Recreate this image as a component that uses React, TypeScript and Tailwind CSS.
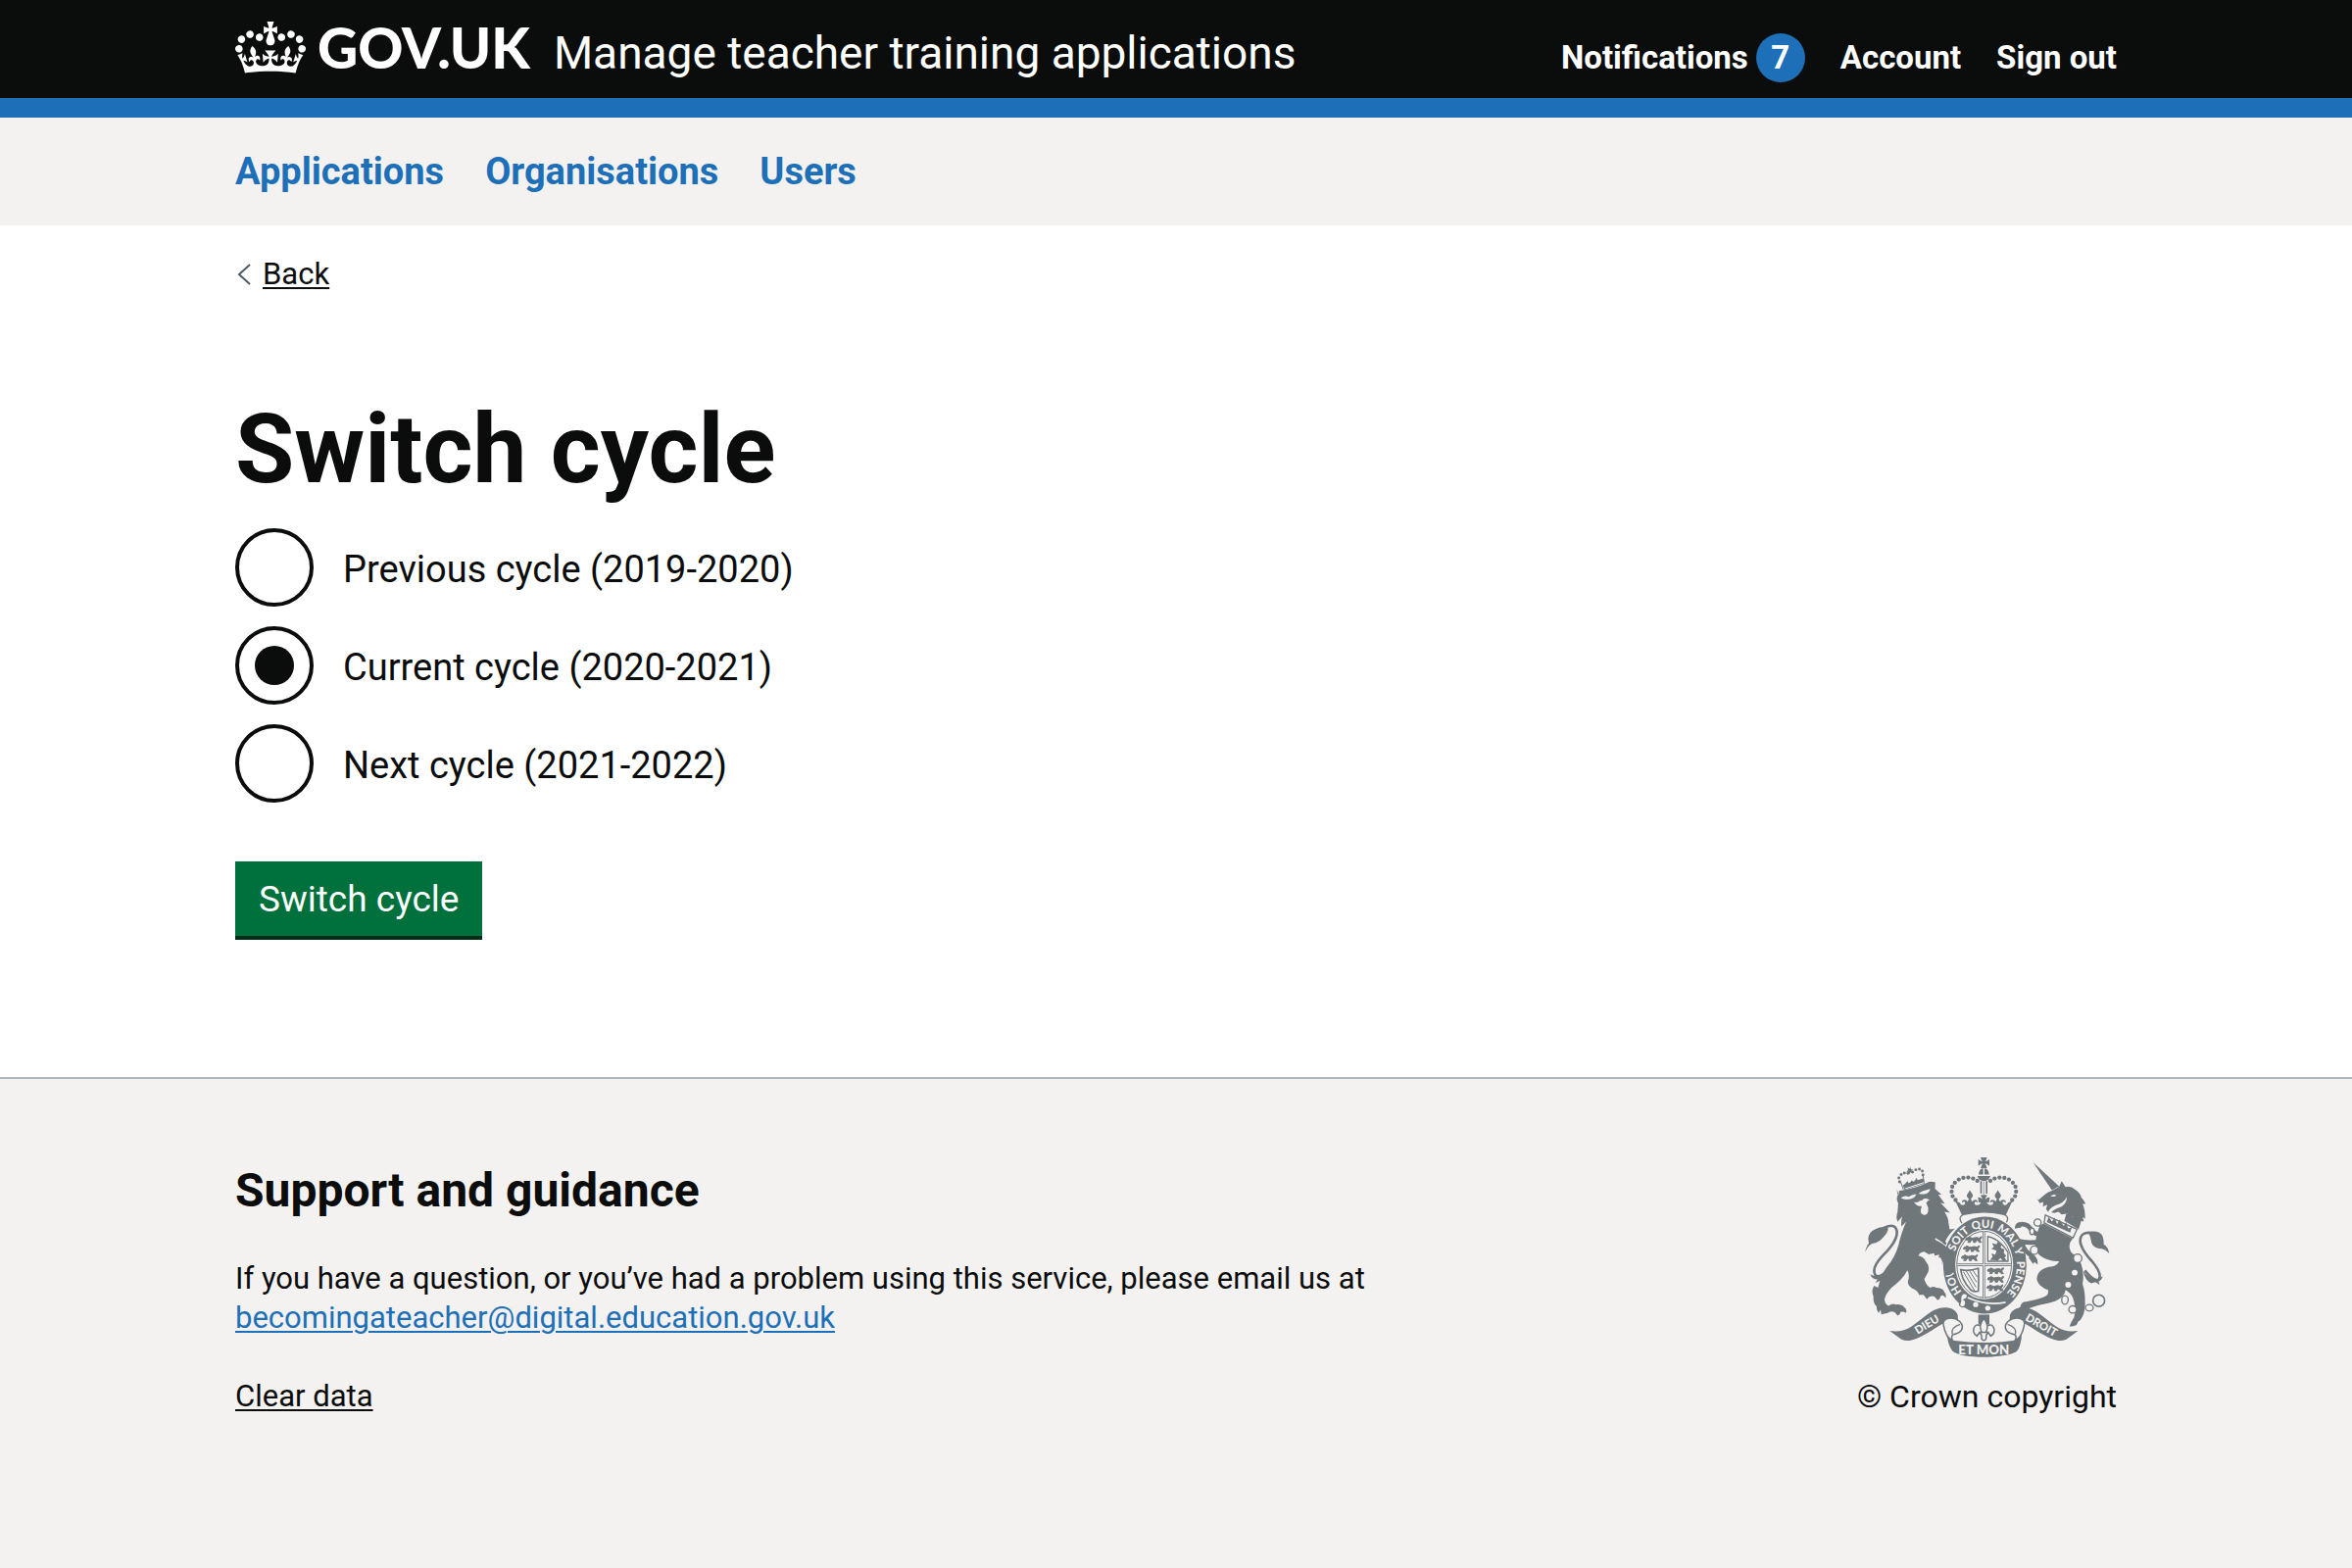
import { useState } from "react";

const CYCLES = [
  { id: "previous", label: "Previous cycle (2019-2020)" },
  { id: "current", label: "Current cycle (2020-2021)" },
  { id: "next", label: "Next cycle (2021-2022)" },
];

function Crown() {
  return (
    <svg aria-hidden="true" viewBox="0 0 132 97" className="h-[53px] w-[72px] shrink-0 fill-current">
      <path d="M25 30.2c3.5 1.5 7.7-.2 9.1-3.7 1.5-3.6-.2-7.8-3.9-9.2-3.6-1.4-7.6.3-9.1 3.9-1.4 3.5.3 7.5 3.9 9zM9 39.5c3.6 1.5 7.8-.2 9.2-3.7 1.5-3.6-.2-7.8-3.9-9.1-3.6-1.5-7.6.2-9.1 3.8-1.4 3.5.3 7.5 3.8 9zM4.4 57.2c3.5 1.5 7.7-.2 9.1-3.8 1.5-3.6-.2-7.7-3.9-9.1-3.5-1.5-7.6.3-9.1 3.8-1.4 3.5.3 7.6 3.9 9.1zm38.3-21.4c3.5 1.5 7.7-.2 9.1-3.8 1.5-3.6-.2-7.7-3.9-9.1-3.6-1.5-7.6.3-9.1 3.8-1.3 3.6.4 7.7 3.9 9.1zm64.4-5.6c-3.6 1.5-7.8-.2-9.1-3.7-1.5-3.6.2-7.8 3.8-9.2 3.6-1.4 7.7.3 9.2 3.9 1.3 3.5-.4 7.5-3.9 9zm15.9 9.3c-3.6 1.5-7.7-.2-9.1-3.7-1.5-3.6.2-7.8 3.7-9.1 3.6-1.5 7.7.2 9.2 3.8 1.5 3.5-.3 7.5-3.8 9zm4.7 17.7c-3.6 1.5-7.8-.2-9.2-3.8-1.5-3.6.2-7.7 3.9-9.1 3.6-1.5 7.7.3 9.2 3.8 1.3 3.5-.4 7.6-3.9 9.1zM89.3 35.8c-3.6 1.5-7.8-.2-9.2-3.8-1.4-3.6.2-7.7 3.9-9.1 3.6-1.5 7.7.3 9.2 3.8 1.4 3.6-.3 7.7-3.9 9.1zM69.7 17.7l8.9 4.7V9.3l-8.9 2.8c-.2-.3-.5-.6-.9-.9L72.4 0H59.6l3.5 11.2c-.3.3-.6.5-.9.9l-8.8-2.8v13.1l8.8-4.7c.3.3.6.7.9.9l-5 15.4v.1c-.2.8-.4 1.6-.4 2.4 0 4.1 3.1 7.5 7 8.1h.2c.3 0 .7.1 1 .1.4 0 .7 0 1-.1h.2c4-.6 7.1-4.1 7.1-8.1 0-.8-.1-1.7-.4-2.4V34l-5.1-15.4c.4-.2.7-.6 1-.9zM66 92.8c16.9 0 32.8 1.1 47.1 3.2 4-16.9 8.9-26.7 14-33.5l-9.6-3.4c1 4.9 1.1 7.2 0 10.2-1.5-1.4-3-4.3-4.2-8.7L108.6 76c2.8-2 5-3.2 7.5-3.3-4.4 9.4-10 11.9-13.6 11.2-4.3-.8-6.3-4.6-5.6-7.9 1-4.7 5.7-5.9 8-.5 4.3-8.7-3-11.4-7.6-8.8 7.1-7.2 7.9-13.5 2.1-21.1-8 6.1-8.1 12.3-4.5 20.8-4.7-5.4-12.1-2.5-9.5 6.2 3.4-5.2 7.9-2 7.2 3.1-.6 4.3-6.4 7.8-13.5 7.2-10.3-.9-10.9-8-11.2-13.8 2.5-.5 7.1 1.8 11 7.3L80.2 60c-4.1 4.4-8 5.3-12.3 5.4 1.4-4.4 8-11.6 8-11.6H55.5s6.4 7.2 7.9 11.6c-4.2-.1-8-1-12.3-5.4l1.4 16.4c3.9-5.5 8.5-7.7 10.9-7.3-.3 5.8-.9 12.8-11.1 13.8-7.2.6-12.9-2.9-13.5-7.2-.7-5 3.8-8.3 7.1-3.1 2.7-8.7-4.6-11.6-9.4-6.2 3.7-8.5 3.6-14.7-4.6-20.8-5.8 7.6-5 13.9 2.2 21.1-4.7-2.6-11.9.1-7.7 8.8 2.3-5.5 7.1-4.2 8.1.5.7 3.3-1.3 7.1-5.7 7.9-3.5.7-9-1.8-13.5-11.2 2.5.1 4.7 1.3 7.5 3.3l-4.7-15.4c-1.2 4.4-2.7 7.2-4.3 8.7-1.1-3-.9-5.3 0-10.2l-9.5 3.4c5 6.9 9.9 16.7 14 33.5 14.8-2.1 30.8-3.2 47.7-3.2z" />
    </svg>
  );
}

const INK = "#6f777b";
const PAPER = "#f3f2f1";

const ARCH_PEARLS = [
  [417, 137], [404, 130], [389, 127], [374, 128], [360, 133],
  [348, 143], [340, 155], [338, 170], [341, 184], [350, 196],
];

const LION_CROWN_PEARLS = [
  [178, 140], [176, 128], [183, 118], [193, 113], [204, 114],
  [218, 110], [228, 103], [239, 101], [248, 107], [250, 119],
];

const PASSANT = "M0 8q2-8 7-6q3-6 8-1q5 4 12 1q8-3 14 1l8-5v5l-5 4q2 6 5 9h-7q-3-6-7-6t-4 6h-7q1-6-3-7t-7 7h-7q3-5 2-8q-5 3-9 0z";

function CrownHalf() {
  return (
    <g>
      {ARCH_PEARLS.map(([x, y]) => (
        <circle key={x} cx={x} cy={y} r="6.5" />
      ))}
      <path d="M426 138h5v38h-5z" />
      <path d="M349 198l14 6q2 8 10 8q8-2 6-10q-6-3-9 3q-2-10 8-10q7 0 9 6l4-8q-8-8-6-13l9-14l9 14q2 6-6 13l4 8q3-6 10-6q9 1 6 10q-3-6-8-3q-3 9 6 10q9 0 13-8q-6-3-7 2l-2-18q8-1 13 6q0-7-6-13h16v62q-39-2-69 6z" />
    </g>
  );
}

function SideScroll() {
  return (
    <g>
      <path d="M148 598C175 602 195 597 215 584C240 568 262 545 285 534C315 520 350 526 357 550Q359 562 355 574C340 566 318 570 300 582C270 600 240 622 212 627Q198 630 184 624Q166 612 148 598z" />
      <path d="M313 580q-4-14 12-20q20-6 38 9q14 14 4 28q-6 8-24 12q-8 4-2 20l-16-14q-10-20-12-35z" fill={PAPER} stroke={INK} strokeWidth="4.5" />
      <path d="M340 608q-6-20 24-30" fill="none" stroke={INK} strokeWidth="4" />
    </g>
  );
}

function RoyalArms() {
  return (
    <svg aria-hidden="true" viewBox="70 65 753 614" className="h-[204px] w-[251px]" fill={INK}>
      {/* crown */}
      <path d="M427 65h20q-2 9-7 13q7-1 14-7v20q-7-6-14-7q5 6 7 14h-20q2-8 7-14q-7 1-14 7v-20q7 6 14 7q-5-4-7-13z" />
      <path d="M421 118q1-18 14-19v19zM453 118q-1-18-14-19v19z" />
      <path d="M417 122h40q-4 14-20 16q-16-2-20-16z" />
      <CrownHalf />
      <g transform="translate(874 0) scale(-1 1)">
        <CrownHalf />
      </g>
      <path d="M437 139v40" stroke={INK} strokeWidth="2" />
      <path d="M370 268q-14-20 4-27q63-16 126 0q18 7 4 27" fill={PAPER} stroke={INK} strokeWidth="4" />

      {/* lion */}
      <g>
        <path d="M190 164l-10-28M254 144l-5-28" stroke={INK} strokeWidth="3" />
        <path d="M188 150l62-20l6 15l-62 20z" />
        <path d="M192 154l10-12l4 9l10-12l5 8l9-14l3 10l13-8" fill="none" stroke={INK} strokeWidth="5" />
        {LION_CROWN_PEARLS.map(([x, y]) => (
          <circle key={x} cx={x} cy={y} r="4.5" />
        ))}
        <path d="M203 96l5 4l4-5l1 7l6-1l-4 6l3 6l-6-2l-5 6l-1-7l-7-1l5-4z" />
        <path d="M196 161l58-19" stroke={PAPER} strokeWidth="3" />
        <path d="M172 184q6-10 4-16q50-8 86-25q10-6 26-1l-1 19l20 18l-10 0l20 28l-13-2l29 30l-17-3q12 18 12 32l4 22l16-2q-20 18-30 40q16 8 28 28q10 18 10 36q6 8 6 26l-8-2q-4 12-14 10l-6-12l-8 2l-4-16l-14-4l2-18l-12-2l2-8l-14 3l-2-8l-16 4l-14-8q-14 2-18 12q18 6 22 16q14 16 8 34l-12 22q6 20 18 26q12-6 18 0q22 0 26 14q6 6 4 18l-8-8l-8 2q-2 12-10 12l-8-10q-14-6-24 8l-10-14l-14 0q-4-14-22-20q-14-10-12-22q6-20-2-34q-10 22-34 42q-30 22-36 46q0 16 12 22q14-10 22-4q18-2 26 8q10 6 6 18l-8-4l-8 0q-2 10-10 12l-8-10q-14-6-22 2l-20 4l-2-14l-6 10q-8-10-6-20q-12-10-10-30q-8-20 2-34l12 6q10-40 26-62q30-36 38-74q6-26 22-66l-14 14q-2-14 2-30l-14 16q-6-14 0-30l2-28q-8-10 0-30l-4-12z" />
        <path d="M182 190q12-10 24-4q12-8 24-8q-6 14-24 16q-14 2-24-4zM236 176q10-8 22-10l14-4q-2 12-14 15q-12 2-22-1z" fill={PAPER} />
        <path d="M222 202q12 4 18-4q10 0 12-6q10-2 18 4q-8 2-10 10q8 12 6 24q-2 12-12 12q-12-2-11-16q4-8 2-12q-12 4-23-12z" fill={PAPER} />
        <path d="M288 315q40 22 56 62" fill="none" stroke={PAPER} strokeWidth="5" />
        <path d="M126 283q40-20 44 10q2 30-44 74q-36 38-22 60q16 12 50-28" fill="none" stroke={INK} strokeWidth="8" />
        <path d="M72 358q4-22 12-30q-8-30 18-42q20-10 40-6q4 12-14 30q-12 16-34 20q-14 6-22 28z" />
        <path d="M88 424q20 12 44-4q16-16 26-20q-6 32-30 40l-24 10l6-10q-16 0-22-16z" />
      </g>

      {/* unicorn */}
      <g>
        <path d="M588 80l80 74l-22 12z" />
        <path d="M602 198l22-19q8-8 22-12l22-12l8-17l12 18q14-6 30 8q16 10 18 24q12 14 13 20l-9 0q8 14 8 46l-8-6q-4 14-12 26l-4-18l-8 14l-6-24l-12 4l-6-12l-16 2l-10-8l-12 4l-20-4l-6-8l4-14l-14 6l2-14l-12 4l-6-14z" />
        <path d="M692 186q0 26-26 34q-18 6-28 22q-6-2-6-6q8-16 26-24q24-6 34-26z" fill={PAPER} />
        <path d="M642 184q8-8 18-2q-6 6-18 2z" fill={PAPER} />
        <path d="M690 238l20 10l28-10l6 24l-8-2l-8 26l-20-12l-24-14z" />
        <path d="M626 242l97 44l-12 26l-89-46z" fill={PAPER} stroke={INK} strokeWidth="4" />
        <path d="M630 264l6-16l10 14l8-12l8 20l8-14l12 20l8-12l6 20l12-6l-6 18z" />
        <path d="M620 268l90 46q-18 20-4 44q22 14 30 34q10 30 4 62q8 20 8 60q0 30-14 50l-8 6q-2 14-20 14l-6 0q6-16 14-28q6-20 0-48q-4-24-26-36q-6 30-50 40q-34 6-60 16q-4 14-16 10l-26 0q2-10 12-12q4-18 18-18q40-6 60-16q12-8 8-20q-26-8-34-30q-2-36 48-42q16-4 20-16q-36 2-62-20l-12-20q0-30 14-68z" />
      </g>

      {/* garter and shield */}
      <ellipse cx="440" cy="396" rx="132" ry="152" fill={PAPER} />
      <ellipse cx="440" cy="396" rx="128" ry="149" />
      <ellipse cx="438" cy="394" rx="89" ry="107" fill={PAPER} />
      <ellipse cx="438" cy="394" rx="84" ry="102" fill="none" stroke={INK} strokeWidth="3" />
      <path d="M437 292v206M355 395h166" stroke={INK} strokeWidth="8" />
      <path d="M437 292v206M355 395h166" stroke={PAPER} strokeWidth="3" />
      <g stroke={INK} strokeWidth="3">
        <path transform="translate(381 310)" d={PASSANT} />
        <path transform="translate(374 338)" d={PASSANT} />
        <path transform="translate(368 366)" d={PASSANT} />
        <path transform="translate(448 406)" d={PASSANT} />
        <path transform="translate(448 432)" d={PASSANT} />
        <path transform="translate(446 458)" d={PASSANT} />
      </g>
      <path d="M449 384v-76q34 6 62 48v28z" fill="none" stroke={INK} strokeWidth="4" />
      <path d="M456 380l8-10l-4-10l12 4l4-12l-16-6l8-6l-6-12l14 4l4-8l12 10l-4 8l12 6l-2 10l8 10l-6 4l8 12l-14-2l-6-8l-8 8l-14-2z" />
      <path d="M366 410q24 6 54-4q2 30 0 70q-20 4-28-10q-22-24-26-56z" fill="none" stroke={INK} strokeWidth="5" />
      <path d="M374 416l34 58M383 414l30 50M393 413l22 36M403 411l14 22" stroke={INK} strokeWidth="3" />

      {/* buckle */}
      <path d="M384 494q56 28 120 16" fill="none" stroke={PAPER} strokeWidth="5" />
      <path d="M376 482q16 2 8 16l-8 4q10 6 2 20q-10 6-16-4l4-12q-2-22 10-24z" fill={PAPER} stroke={INK} strokeWidth="4" />
      <circle cx="412" cy="517" r="8" fill={PAPER} />
      <circle cx="449" cy="528" r="8" fill={PAPER} />

      {/* lion's forepaw over the garter */}
      <path d="M296 322q40 20 50 62q0 16-4 34l-10 10l-8-14l-10-2l-2-22l-18-40z" />
      <path d="M344 420q-6 10-24 10" fill="none" stroke={PAPER} strokeWidth="4" />

      {/* unicorn's forelegs */}
      <path d="M616 302q-24 0-34-16q-10-16-28-16l-14 4M614 322q-30 8-60 2q2 24 28 42l14 18" fill="none" stroke={INK} strokeWidth="14" />
      <path d="M532 284q0-16 14-20l6 16zM542 338q0-16 8-22l14 14zM574 372l18-6q12 12 10 28l-10-8l-4 6z" />

      {/* chain and tail */}
      <g fill={PAPER} stroke={INK} strokeWidth="4">
        <circle cx="602" cy="265" r="11" />
        <ellipse cx="585" cy="292" rx="7" ry="10" />
        <ellipse cx="592" cy="350" rx="12" ry="13" />
        <circle cx="725" cy="375" r="13" />
        <ellipse cx="686" cy="503" rx="10" ry="13" />
        <ellipse cx="710" cy="532" rx="12" ry="11" />
        <ellipse cx="761" cy="527" rx="12" ry="10" />
      </g>
      <circle cx="790" cy="505" r="18" fill="none" stroke={INK} strokeWidth="5" />
      <circle cx="716" cy="419" r="9" fill={PAPER} />
      <circle cx="696" cy="456" r="9" fill={PAPER} />
      <path d="M772 298q-40-8-39 26q4 26 36 60q34 40 20 58q-16 2-42-30" fill="none" stroke={INK} strokeWidth="8" />
      <path d="M758 294q36-6 44 14q4 14 3 24q14 8 17 28q-12-12-22-14q-24 0-32-18q-2-14-10-34z" />
      <path d="M742 414q20 26 44 24l17-8q-4 12-14 16l4 10l-14-8l-12 4q-20-10-25-38z" />

      <defs>
        <path id="motto-ring" d="M440 512A98 115 0 0 1 440 281A98 115 0 0 1 440 512" />
      </defs>
      <g fill={PAPER} fontFamily="Lato, sans-serif" fontWeight="900" fontSize="34" textAnchor="middle">
        <text><textPath href="#motto-ring" startOffset="16%">HO</textPath></text>
        <text><textPath href="#motto-ring" startOffset="37%">SOIT</textPath></text>
        <text><textPath href="#motto-ring" startOffset="49%">QUI</textPath></text>
        <text><textPath href="#motto-ring" startOffset="61%">MAL</textPath></text>
        <text><textPath href="#motto-ring" startOffset="69%">Y</textPath></text>
        <text><textPath href="#motto-ring" startOffset="81%">PENSE</textPath></text>
      </g>

      {/* fleur-de-lis */}
      <path d="M420 548h34v30h-34z" />
      <g fill={PAPER} stroke={INK} strokeWidth="4.5">
        <path d="M432 604q-12-2-16 10q-14-8-10-24q6-16 20-8q6 6 4 14z" />
        <path d="M442 604q12-2 16 10q14-8 10-24q-6-16-20-8q-6 6-4 14z" />
        <path d="M437 560q18 20 6 44h-12q-12-24 6-44z" />
        <path d="M424 602h26l-6 10q2 14-7 15q-9-1-7-15z" />
      </g>

      {/* scrolls */}
      <SideScroll />
      <g transform="translate(874 0) scale(-1 1)">
        <SideScroll />
      </g>
      <path d="M325 608q6 14 22 20q90 12 180 0q16-6 22-20q6 6 2 20q-4 24-14 34q-28 16-100 16t-96-18q-16-20-16-52z" />
      <g fill={PAPER} fontFamily="Lato, sans-serif" fontWeight="900" fontSize="34" textAnchor="middle">
        <text x="437" y="669" fontSize="40">ET MON</text>
        <text transform="translate(268 588) rotate(-31)">DIEU</text>
        <text transform="translate(608 590) rotate(30)">DROIT</text>
      </g>
    </svg>
  );
}

export default function App() {
  const [cycle, setCycle] = useState("current");

  return (
    <div className="flex min-h-screen flex-col bg-white font-[Roboto,sans-serif] text-[31px] leading-10 text-[#0b0c0c]">
      <header>
        <div className="border-b-20 border-[#1d70b8] bg-[#0b0c0c] px-8 text-white">
          <div className="mx-auto flex h-[100px] max-w-[1920px] items-baseline pt-4">
            <a href="#home" className="flex items-center gap-3 font-[Lato,sans-serif] text-[57px] leading-16 font-black">
              <Crown />
              <span className="self-baseline">GOV.UK</span>
            </a>
            <a href="#service" className="ml-6 text-[46px]">
              Manage teacher training applications
            </a>
            <ul className="ml-auto flex items-baseline gap-9 text-[33px] font-bold">
              <li>
                <a href="#notifications" className="flex items-center gap-2">
                  Notifications
                  <span className="flex size-[50px] items-center justify-center rounded-full bg-[#1d70b8]">7</span>
                </a>
              </li>
              <li>
                <a href="#account">Account</a>
              </li>
              <li>
                <a href="#sign-out">Sign out</a>
              </li>
            </ul>
          </div>
        </div>
        <nav aria-label="Primary" className="bg-[#f3f2f1] px-8 py-[31px]">
          <ul className="mx-auto flex max-w-[1920px] gap-[42px] text-[38px] leading-12 font-bold text-[#1d70b8]">
            <li>
              <a href="#applications">Applications</a>
            </li>
            <li>
              <a href="#organisations">Organisations</a>
            </li>
            <li>
              <a href="#users">Users</a>
            </li>
          </ul>
        </nav>
      </header>

      <main className="px-8 pt-[30px] pb-[140px]">
        <div className="mx-auto max-w-[1920px]">
          <a href="#back" className="inline-flex items-center gap-3 align-top">
            <svg aria-hidden="true" viewBox="0 0 14 22" className="ml-0.5 h-[22px] w-[14px] fill-none stroke-[#505a5f]" strokeWidth="2">
              <path d="M13 1L2 11l11 10" />
            </svg>
            <span className="underline decoration-2 underline-offset-3">Back</span>
          </a>

          <form onSubmit={(e) => e.preventDefault()}>
            <fieldset>
              <legend className="pt-[109px]">
                <h1 className="text-[98px] leading-[100px] font-bold">Switch cycle</h1>
              </legend>
              <div className="mt-[30px] flex flex-col items-start gap-5 text-[38px]">
                {CYCLES.map(({ id, label }) => (
                  <div key={id} className="flex items-center">
                    <input
                      type="radio"
                      name="cycle"
                      id={id}
                      checked={cycle === id}
                      onChange={() => setCycle(id)}
                      className="grid size-20 appearance-none place-items-center rounded-full border-4 border-[#0b0c0c] before:size-10 before:rounded-full checked:before:bg-[#0b0c0c]"
                    />
                    <label htmlFor={id} className="pt-[18px] pb-[14px] pl-[30px] leading-12">
                      {label}
                    </label>
                  </div>
                ))}
              </div>
            </fieldset>
            <button
              type="submit"
              className="mt-15 h-20 border-b-4 border-[#002d18] bg-[#00703c] px-6 pt-0.5 text-[37px] text-white"
            >
              Switch cycle
            </button>
          </form>
        </div>
      </main>

      <footer className="grow border-t-2 border-[#b1b4b6] bg-[#f3f2f1] px-8 pt-20 pb-20">
        <div className="mx-auto flex max-w-[1920px] items-start justify-between">
          <div className="pt-1.5">
            <h2 className="text-[48px] leading-14 font-bold">Support and guidance</h2>
            <p className="mt-[42px]">
              If you have a question, or you’ve had a problem using this service, please email us at
              <br />
              <a href="mailto:becomingateacher@digital.education.gov.uk" className="text-[#1d70b8] underline decoration-2 underline-offset-3">
                becomingateacher@digital.education.gov.uk
              </a>
            </p>
            <p className="mt-10">
              <a href="#clear-data" className="underline decoration-2 underline-offset-3">
                Clear data
              </a>
            </p>
          </div>
          <a href="#copyright" className="flex flex-col items-center gap-5 text-[32px]">
            <RoyalArms />
            © Crown copyright
          </a>
        </div>
      </footer>
    </div>
  );
}
